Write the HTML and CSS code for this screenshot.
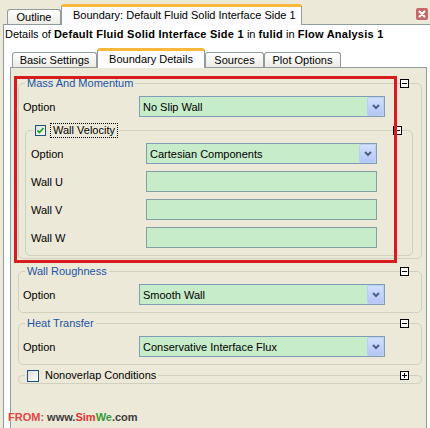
FILE: index.html
```html
<!DOCTYPE html>
<html>
<head>
<meta charset="utf-8">
<link rel="stylesheet" href="styles.css">
</head>
<body>
<div class="topbar">
  <div class="ttab">Outline</div>
  <div class="ttab active">Boundary: Default Fluid Solid Interface Side 1</div>
  <div class="close"><svg width="12" height="12" viewBox="0 0 12 12"><rect x="0" y="0" width="12" height="12" rx="2" fill="#c46a6a"/><path d="M3.5 3.5L8.5 8.5M8.5 3.5L3.5 8.5" stroke="#fff" stroke-width="2" stroke-linecap="round"/></svg></div>
</div>
<div class="sheet">
  <div class="details">Details of <b>Default Fluid Solid Interface Side 1</b> in <b>fulid</b> in <b>Flow Analysis 1</b></div>
  <div class="subtabs">
    <div class="stab w1">Basic Settings</div>
    <div class="stab active w2">Boundary Details</div>
    <div class="stab w3">Sources</div>
    <div class="stab w4">Plot Options</div>
  </div>
  <div class="panel">
    <div class="grp">
      <div class="grp-head">
        <span class="grp-title">Mass And Momentum</span>
        <svg class="toggle" width="9" height="9" viewBox="0 0 9 9"><rect x="0.5" y="0.5" width="8" height="8" fill="#fbfbf8" stroke="#000"/><path d="M2 4.5H7" stroke="#000"/></svg>
      </div>
      <div class="row first">
        <span class="lbl">Option</span>
        <div class="combo">No Slip Wall<span class="btn"><svg width="8" height="6" viewBox="0 0 8 6"><path d="M1 1L4 4L7 1" fill="none" stroke="#4d6185" stroke-width="2"/></svg></span></div>
      </div>
      <div class="grp nested">
        <div class="grp-head">
          <span class="grp-title plain"><span class="chk small"><svg width="9" height="9" viewBox="0 0 9 9"><path d="M1.5 4.5L3.5 6.5L7.5 2" fill="none" stroke="#21a121" stroke-width="1.8"/></svg></span><span class="focus">Wall Velocity</span></span>
          <svg class="toggle" width="9" height="9" viewBox="0 0 9 9"><rect x="0.5" y="0.5" width="8" height="8" fill="#fbfbf8" stroke="#000"/><path d="M2 4.5H7" stroke="#000"/></svg>
        </div>
        <div class="row first">
          <span class="lbl n">Option</span>
          <div class="combo n">Cartesian Components<span class="btn"><svg width="8" height="6" viewBox="0 0 8 6"><path d="M1 1L4 4L7 1" fill="none" stroke="#4d6185" stroke-width="2"/></svg></span></div>
        </div>
        <div class="row">
          <span class="lbl n">Wall U</span>
          <div class="field"></div>
        </div>
        <div class="row">
          <span class="lbl n">Wall V</span>
          <div class="field"></div>
        </div>
        <div class="row">
          <span class="lbl n">Wall W</span>
          <div class="field"></div>
        </div>
      </div>
    </div>

    <div class="grp g2">
      <div class="grp-head">
        <span class="grp-title">Wall Roughness</span>
        <svg class="toggle" width="9" height="9" viewBox="0 0 9 9"><rect x="0.5" y="0.5" width="8" height="8" fill="#fbfbf8" stroke="#000"/><path d="M2 4.5H7" stroke="#000"/></svg>
      </div>
      <div class="row first">
        <span class="lbl">Option</span>
        <div class="combo">Smooth Wall<span class="btn"><svg width="8" height="6" viewBox="0 0 8 6"><path d="M1 1L4 4L7 1" fill="none" stroke="#4d6185" stroke-width="2"/></svg></span></div>
      </div>
    </div>

    <div class="grp g3">
      <div class="grp-head">
        <span class="grp-title">Heat Transfer</span>
        <svg class="toggle" width="9" height="9" viewBox="0 0 9 9"><rect x="0.5" y="0.5" width="8" height="8" fill="#fbfbf8" stroke="#000"/><path d="M2 4.5H7" stroke="#000"/></svg>
      </div>
      <div class="row first">
        <span class="lbl">Option</span>
        <div class="combo">Conservative Interface Flux<span class="btn"><svg width="8" height="6" viewBox="0 0 8 6"><path d="M1 1L4 4L7 1" fill="none" stroke="#4d6185" stroke-width="2"/></svg></span></div>
      </div>
    </div>

    <div class="grp g4">
      <div class="grp-head">
        <span class="grp-title plain"><span class="chk"></span><span class="cl">Nonoverlap Conditions</span></span>
        <svg class="toggle" width="9" height="9" viewBox="0 0 9 9"><rect x="0.5" y="0.5" width="8" height="8" fill="#fbfbf8" stroke="#000"/><path d="M2 4.5H7M4.5 2V7" stroke="#000"/></svg>
      </div>
    </div>
  </div>
</div>
<div class="annot"></div>
<div class="from"><span class="c1">FROM:</span> <span class="c2">www.</span><span class="c3">Sim</span><span class="c4">We</span><span class="c2">.com</span></div>
</body>
</html>
```

FILE: styles.css
```css
body {
  margin: 0;
  width: 430px;
  height: 428px;
  overflow: hidden;
  position: relative;
  background: #ece9d8;
  font-family: "Liberation Sans", Arial, sans-serif;
  font-size: 11px;
  color: #000;
}

.topbar {
  display: flex;
  align-items: flex-end;
  height: 24px;
  padding-left: 7px;
  position: relative;
  z-index: 2;
}

.ttab {
  box-sizing: border-box;
  height: 15px;
  width: 54px;
  border: 1px solid #919b9c;
  border-bottom: none;
  border-radius: 3px 3px 0 0;
  background: linear-gradient(#ffffff, #ecebe5);
  line-height: 14px;
  text-align: center;
  white-space: nowrap;
}

.ttab.active {
  width: 241px;
  height: 21px;
  margin-bottom: -1px;
  text-align: left;
  padding-left: 11px;
  background: #fcfcfe;
  border-top: 3px solid #f7b83c;
  line-height: 16px;
}

.close {
  margin-left: auto;
  margin-right: 2px;
  align-self: flex-start;
  margin-top: 8px;
  height: 12px;
}
.close svg { display: block; }

.sheet {
  margin-left: 3px;
  margin-right: -20px;
  background: #fff;
  border-top: 1px solid #919b9c;
  border-left: 1px solid #919b9c;
  height: 420px;
}

.details {
  box-sizing: border-box;
  height: 23px;
  padding: 3px 0 0 1px;
  line-height: 13px;
  white-space: nowrap;
}
.details b { letter-spacing: 0.25px; }

.subtabs {
  display: flex;
  align-items: flex-end;
  height: 19px;
  padding-left: 8px;
  position: relative;
  z-index: 2;
}

.stab {
  box-sizing: border-box;
  height: 15px;
  border: 1px solid #919b9c;
  border-bottom: none;
  border-radius: 3px 3px 0 0;
  background: linear-gradient(#ffffff, #ecebe5);
  line-height: 14px;
  text-align: center;
  white-space: nowrap;
}
.stab.active {
  height: 20px;
  margin-bottom: -1px;
  background: #fcfcfe;
  border-top: 3px solid #f7b83c;
  line-height: 16px;
}
.w1 { width: 85px; }
.w2 { width: 108px; }
.w3 { width: 59px; }
.w4 { width: 77px; }

.panel {
  margin-left: 6px;
  width: 417px;
  box-sizing: border-box;
  border: 1px solid #919b9c;
  background: #ece9d8;
  padding: 15px 4px 60px 7px;
}

.grp {
  border: 1px solid #d0d0bf;
  border-radius: 5px;
  padding: 0 4px 2px 4px;
}

.grp-head {
  display: flex;
  align-items: center;
  height: 13px;
  margin: -7px 8px 0 2px;
}

.grp-title {
  display: flex;
  align-items: center;
  background: #ece9d8;
  padding: 0 2px;
  line-height: 13px;
  color: #2153a5;
  white-space: nowrap;
}
.grp-title.plain { color: #000; }

.toggle {
  margin-left: auto;
  display: block;
}

.row {
  display: flex;
  align-items: center;
  height: 21px;
  margin-top: 7px;
}
.row.first { margin-top: 6px; }

.lbl { width: 116px; flex: none; }
.lbl.n { width: 115px; }

.combo {
  box-sizing: border-box;
  width: 246px;
  height: 21px;
  border: 1px solid #7f9db9;
  background: #c7ecc9;
  display: flex;
  align-items: center;
  padding-left: 3px;
  white-space: nowrap;
}
.combo.n { width: 231px; }

.btn {
  margin-left: auto;
  box-sizing: border-box;
  width: 17px;
  height: 19px;
  border: 1px solid #bccdf4;
  border-radius: 2px;
  background: linear-gradient(#d3e0fd, #b3c6f6);
  display: flex;
  align-items: center;
  justify-content: center;
}
.btn svg { display: block; }

.field {
  box-sizing: border-box;
  width: 231px;
  height: 21px;
  border: 1px solid #849ea4;
  background: #c7ecc9;
}

.grp.nested {
  margin: 13px 4px 0 2px;
  padding: 0 4px 7px 5px;
}
.grp.nested .grp-head { margin-right: 6px; }

.g2 { margin-top: 12px; padding-bottom: 7px; }
.g3 { margin-top: 10px; padding-bottom: 7px; }
.g4 { margin-top: 10px; padding-bottom: 0; height: 7px; }
.g4 .grp-head { margin-bottom: -7px; }

.chk {
  box-sizing: border-box;
  width: 12px;
  height: 12px;
  border: 1px solid #1c5180;
  background: linear-gradient(135deg, #dcdcd7, #ffffff);
  display: flex;
  align-items: center;
  justify-content: center;
  flex: none;
}
.chk.small { width: 11px; height: 11px; }
.chk svg { display: block; }

.focus {
  margin-left: 5px;
  padding: 0 2px;
  outline: 1px dotted #000;
  line-height: 13px;
}
.cl { margin-left: 6px; }

.annot {
  position: absolute;
  left: 14px;
  top: 76px;
  width: 383px;
  height: 187px;
  box-sizing: border-box;
  border: 3px solid #d61c1c;
  z-index: 5;
}

.from {
  position: absolute;
  left: 8px;
  top: 411px;
  font-weight: bold;
  font-size: 11px;
  white-space: nowrap;
  z-index: 5;
}
.c1 { color: #e04848; }
.c2 { color: #3c3c3c; }
.c3 { color: #e03434; }
.c4 { color: #3a9a3a; }
```
